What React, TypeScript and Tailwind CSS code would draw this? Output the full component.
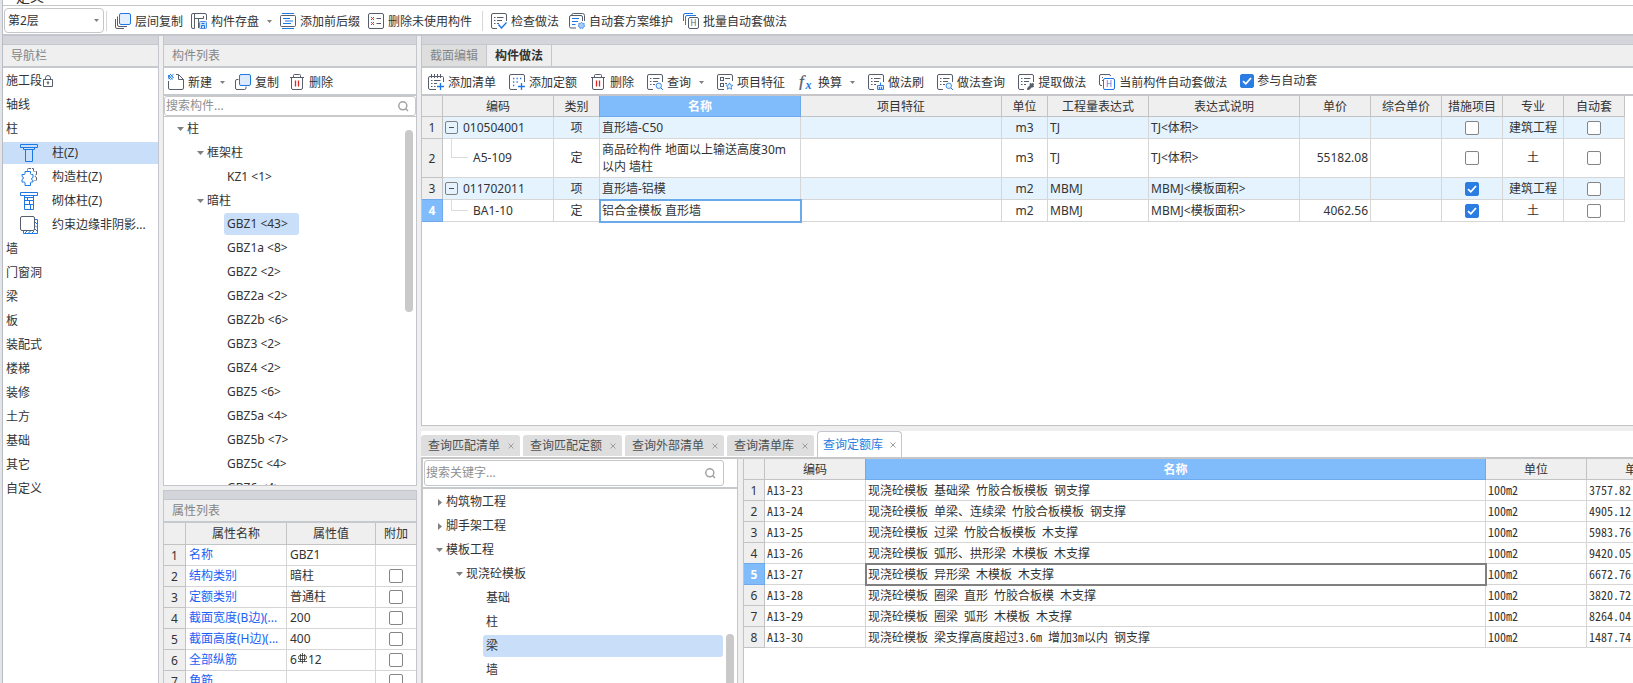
import type { ReactNode } from "react";

const DARK = "#565d6b";
const BLUE = "#1c78e4";

function Icon({ children, size = 16 }: { children: ReactNode; size?: number }) {
  return (
    <svg width={size} height={size} viewBox={`0 0 ${size} ${size}`} fill="none" stroke={DARK} className="shrink-0" aria-hidden="true">
      {children}
    </svg>
  );
}

// sheet outline with three text rows, base of most toolbar icons
function Sheet() {
  return (
    <>
      <path d="M15.5 8V2A1.5 1.5 0 0 0 14 .5H2A1.5 1.5 0 0 0 .5 2v12A1.5 1.5 0 0 0 2 15.5h4" />
      <path d="M3 4.5h1.5M6 4.5h6.500M3 7.500h1.500M6 7.500h5M3 10.500h1.500M6 10.500h2" />
    </>
  );
}

const icons = {
  layerCopy: (
    <Icon>
      <path d="M2.500 3.500v8.500a1.500 1.500 0 0 0 1.500 1.500h8M.5 6v8A1.500 1.500 0 0 0 2 15.500h7" />
      <rect x="4.500" y=".5" width="11" height="11" rx="1.500" fill="#e3effd" stroke={BLUE} />
    </Icon>
  ),
  store: (
    <Icon>
      <path d="M15.500 7V2A1.500 1.500 0 0 0 14 .5H2A1.500 1.500 0 0 0 .5 2v12A1.500 1.500 0 0 0 2 15.500h1.500V1M7.500 15V9.500M3.500 5.500h9V3M7.500 9.500V5.500" />
      <rect x="8.500" y="8.500" width="7" height="7" rx="1" stroke="#4a90e8" fill="#cfe2fb" />
      <path d="M10.500 15v-2.500h3V15M10.500 10.500h3" stroke={BLUE} />
    </Icon>
  ),
  affix: (
    <Icon>
      <path d="M2 .5h12M2 15.500h12" stroke={BLUE} />
      <rect x=".5" y="2.500" width="15" height="11" rx="1" />
      <path d="M3 5.500h7M5 8h8M3 10.500h8" stroke={BLUE} />
    </Icon>
  ),
  removeUnused: (
    <Icon>
      <rect x=".5" y=".5" width="15" height="15" rx="1.500" />
      <path d="M3 4l3 3M6 4L3 7M3 9l3 3M6 9l-3 3" stroke="#e02f2f" />
      <path d="M8.500 5.500H13M8.500 10.500H13" />
    </Icon>
  ),
  check: (
    <Icon>
      <Sheet />
      <path d="M7.500 11.500l3 3.500 5-5.500" stroke={BLUE} strokeWidth="1.400" />
    </Icon>
  ),
  scheme: (
    <Icon>
      <path d="M2.500 2.500a2 2 0 0 1 2-2h9a2 2 0 0 1 2 2V8M13.500 8V4A1.500 1.500 0 0 0 12 2.500H2A1.500 1.500 0 0 0 .5 4v9.500A1.500 1.500 0 0 0 2 15h5" />
      <path d="M3 5.500h7M3 8.500h6M3 11.500h3.500" stroke={BLUE} />
      <path d="M12.500 9.200l1 1.200h1.700l-.3 1.600.9 1.200-1.400.7-.5 1.500-1.400-.5-1.500.5-.5-1.500-1.300-.7.8-1.300-.2-1.500h1.700z" fill="#a9ccf7" stroke="#5a9bea" />
    </Icon>
  ),
  batch: (
    <Icon>
      <path d="M.5 8V2A1.500 1.500 0 0 1 2 .5h8M2.500 12V4A1.500 1.500 0 0 1 4 2.500h9" stroke={BLUE} />
      <rect x="5.500" y="4.500" width="10" height="11" rx="1.500" />
      <text x="7.600" y="13" fontSize="8" fill={DARK} stroke="none">H</text>
    </Icon>
  ),
  create: (
    <Icon>
      <path d="M.5 7v7A1.500 1.500 0 0 0 2 15.500h12a1.500 1.500 0 0 0 1.500-1.500V5.500l-5-5H8M10.500 1v4.500h5" />
      <path d="M0 1l4.500 4.500M2 0l3.500 3.500M0 3l2.500 2.500M5.500 0L0 5.500M3 0L0 3M5.500 3L3 5.500" stroke={BLUE} strokeWidth=".9" />
    </Icon>
  ),
  copy: (
    <Icon>
      <path d="M3.500 5.500H2A1.500 1.500 0 0 0 .5 7v7A1.500 1.500 0 0 0 2 15.500h7.500A1.500 1.500 0 0 0 11 14v-1.500" />
      <rect x="4.500" y=".5" width="11" height="11" rx="1.500" fill="#dceafc" stroke={BLUE} />
    </Icon>
  ),
  trash: (
    <Icon>
      <path d="M1 3.500h14M4.500 3.500v-2q0-1 1-1h5q1 0 1 1v2M2.500 3.500V14q0 1.500 1.500 1.500h8q1.500 0 1.500-1.500V3.500" />
      <path d="M6.500 6.500v6M9.500 6.500v6" stroke="#dc2626" strokeWidth="1.300" />
    </Icon>
  ),
  addList: (
    <Icon>
      <path d="M15.500 8V3.500a1 1 0 0 0-1-1H2A1.500 1.500 0 0 0 .5 4v10A1.500 1.500 0 0 0 2 15.500h6M3.500 0v4M6.500 0v4M9.500 0v4M12.500 0v4M3 6.500h1.500M6 6.500h6.500M3 9.500h1.500M6 9.500h3M3 12.500h1.500M6 12.500h1.500" />
      <path d="M12.500 9v7M9 12.500h7" stroke={BLUE} strokeWidth="1.300" />
    </Icon>
  ),
  addQuota: (
    <Icon>
      <path d="M15.500 8V2A1.500 1.500 0 0 0 14 .5H2A1.500 1.500 0 0 0 .5 2v12A1.500 1.500 0 0 0 2 15.500h6" />
      <path d="M4 4.500h1.300M7.500 4.500h1.300M11 4.500h1.300M4 8h1.300M7.500 8h1.300M4 11.500h1.300" stroke={BLUE} strokeWidth="1.300" />
      <path d="M12.500 9v7M9 12.500h7" stroke={BLUE} strokeWidth="1.300" />
    </Icon>
  ),
  query: (
    <Icon>
      <Sheet />
      <circle cx="11.800" cy="11.800" r="2.700" stroke="#3c8bea" fill="#e6f1fe" />
      <path d="M13.800 13.800L16 16" stroke={BLUE} />
    </Icon>
  ),
  feature: (
    <Icon>
      <path d="M15.500 7V2A1.500 1.500 0 0 0 14 .5H2A1.500 1.500 0 0 0 .5 2v12A1.500 1.500 0 0 0 2 15.500h5M8 4.500h5M8 9.500h2" />
      <rect x="3.500" y="3.500" width="3" height="3" />
      <rect x="3.500" y="9.500" width="3" height="3" />
      <path d="M12.500 8.800l1 2.200 2.400.3-1.800 1.600.5 2.400-2.100-1.200-2.100 1.200.5-2.400-1.800-1.600 2.400-.3z" fill="#e6f1fe" stroke="#4a94ec" />
    </Icon>
  ),
  convert: (
    <Icon>
      <text x="1" y="12.500" fontSize="17" fontStyle="italic" fontFamily="Liberation Serif" fill={DARK} stroke={DARK} strokeWidth=".3">f</text>
      <text x="7.500" y="15" fontSize="12" fontStyle="italic" fontWeight="bold" fontFamily="Liberation Serif" fill={BLUE} stroke="none">x</text>
    </Icon>
  ),
  brush: (
    <Icon>
      <Sheet />
      <path d="M12.500 8.500v3M9.500 15.500v-4h6v4zM11.500 13v2.500M13.500 13v2.500" stroke="#2f83e8" fill="#cfe2fb" />
    </Icon>
  ),
  extract: (
    <Icon>
      <Sheet />
      <path d="M9.500 15.500l.4-1.800 3.200-3.200 1.500 1.500-3.200 3.200z" fill={DARK} />
      <path d="M12 9.500l3.500 3.500M13.800 11.500L15.500 9.500" strokeWidth="2" />
    </Icon>
  ),
  currentAuto: (
    <Icon>
      <path d="M3 11.500H2A1.500 1.500 0 0 1 .5 10V2A1.500 1.500 0 0 1 2 .5h8A1.500 1.500 0 0 1 11.500 2M3 3.500h1M3 6.500h1" />
      <rect x="4.500" y="4.500" width="11" height="11" rx="1.500" stroke={BLUE} fill="#fff" />
      <text x="7" y="13" fontSize="8" fill={BLUE} stroke="none">H</text>
    </Icon>
  ),
  column: (
    <Icon size={18}>
      <path d="M.5.5h17v3H.5zM3.500 3.500v2h11v-2M5.500 5.500h7v12h-7z" stroke={BLUE} />
    </Icon>
  ),
  structColumn: (
    <Icon size={18}>
      <path d="M7.500 2.500v-1q0-1 1-1h5v2q0 1 1 1h2v3q-1.500.5-1.500 1.500t1.500 1.500v3h-2" strokeDasharray="5 1" />
      <path d="M5 3.500h5.500v2q0 1 1 1H13v3q-1.500.5-1.500 1.500t1.500 1.500V14h-1.500q-1 0-1 1v2.500H5V15q0-1-1-1H2v-2.500q1.500-.5 1.500-1.500T2 8.500v-2h2q1 0 1-1z" stroke={BLUE} fill="#fff" />
    </Icon>
  ),
  brickColumn: (
    <Icon size={18}>
      <path d="M.5.5h17v3H.5zM4.500 3.500v14h9v-14M4.500 8.500h9M4.500 12.500h9M9.500 8.500v4M7.500 5.500v3M10.500 12.500v5M4.500 5.500h9" stroke={BLUE} />
    </Icon>
  ),
  edgeColumn: (
    <Icon size={18}>
      <path d="M3.500 15v2.500h14v-14H15M5 17l2-2M8.500 17l2-2M12 17l2-2M15 6l2 2M15 9.500l2 2M15 13l2 2" stroke={BLUE} />
      <rect x=".5" y=".5" width="14" height="14" rx="1.500" fill="#fff" />
    </Icon>
  ),
};

function Down({ small = false }: { small?: boolean }) {
  return (
    <svg width={small ? 5 : 7} height={small ? 3 : 4} viewBox="0 0 7 4" preserveAspectRatio="none" className="shrink-0" aria-hidden="true">
      <path d="M0 0h7L3.500 4z" fill="#808080" />
    </svg>
  );
}

function Right() {
  return (
    <svg width="4" height="7" viewBox="0 0 4 7" className="shrink-0" aria-hidden="true">
      <path d="M0 0v7l4-3.500z" fill="#808080" />
    </svg>
  );
}

function Magnifier() {
  return (
    <svg width="11" height="11" viewBox="0 0 11 11" fill="none" stroke="#a3a3a3" strokeWidth="1.500" className="shrink-0" aria-hidden="true">
      <circle cx="4.800" cy="4.800" r="4" />
      <path d="M7.700 7.700l2.300 2.300" />
    </svg>
  );
}

function Tool({ icon, label, menu = false }: { icon: ReactNode; label: string; menu?: boolean }) {
  return (
    <button type="button" className="flex shrink-0 items-center gap-1 whitespace-nowrap">
      {icon}
      <span className="pt-px">{label}</span>
      {menu && (
        <span className="pl-1">
          <Down small />
        </span>
      )}
    </button>
  );
}

function Check({ label, checked = false }: { label: string; checked?: boolean }) {
  return (
    <span className="relative inline-flex size-[14px] shrink-0 align-middle">
      <input
        type="checkbox"
        aria-label={label}
        defaultChecked={checked}
        className="peer size-[14px] appearance-none rounded-[2px] border border-[#858585] bg-white checked:border-[#2b7de1] checked:bg-[#2b7de1]"
      />
      <svg viewBox="0 0 14 14" className="pointer-events-none absolute inset-0 hidden peer-checked:block" fill="none" stroke="#fff" strokeWidth="1.800">
        <path d="M3 7.200l2.800 2.600L11 4" />
      </svg>
    </span>
  );
}

function PanelTitle({ children }: { children: ReactNode }) {
  return (
    <>
      <div className="h-[9px] shrink-0 border-b border-[#c3c8cd] bg-[#d3d5da]" />
      <h2 className="h-[23px] shrink-0 border-b-2 border-[#c6cace] bg-[#efefef] pl-2 leading-[22px] text-[#858585]">{children}</h2>
    </>
  );
}

const navTop = ["轴线", "柱"];
const navColumn = [
  { icon: icons.column, label: "柱(Z)", active: true },
  { icon: icons.structColumn, label: "构造柱(Z)" },
  { icon: icons.brickColumn, label: "砌体柱(Z)" },
  { icon: icons.edgeColumn, label: "约束边缘非阴影..." },
];
const navRest = ["墙", "门窗洞", "梁", "板", "装配式", "楼梯", "装修", "土方", "基础", "其它", "自定义"];

const members = [
  "GBZ1 <43>", "GBZ1a <8>", "GBZ2 <2>", "GBZ2a <2>", "GBZ2b <6>", "GBZ3 <2>", "GBZ4 <2>",
  "GBZ5 <6>", "GBZ5a <4>", "GBZ5b <7>", "GBZ5c <4>", "GBZ6 <4>",
];

function Rebar() {
  return (
    <svg width="11" height="11" viewBox="0 0 11 11" fill="none" stroke="#333" strokeWidth=".8" className="mb-1 inline-block" role="img" aria-label="HRB400">
      <path d="M3 2.500h5q1.500 0 1.500 2t-1.500 2H3q-1.500 0-1.500-2t1.500-2zM5.500 0v10.500M3.500 1v7.500M7.500 1v7.500M1 8.500h9" />
    </svg>
  );
}

const props: { name: string; value: ReactNode; extra: boolean }[] = [
  { name: "名称", value: "GBZ1", extra: false },
  { name: "结构类别", value: "暗柱", extra: true },
  { name: "定额类别", value: "普通柱", extra: true },
  { name: "截面宽度(B边)(...", value: "200", extra: true },
  { name: "截面高度(H边)(...", value: "400", extra: true },
  { name: "全部纵筋", value: <>6<Rebar />12</>, extra: true },
  { name: "角筋", value: "", extra: true },
];

const methods = [
  { code: "010504001", kind: "项", name: "直形墙-C50", unit: "m3", expr: "TJ", note: "TJ<体积>", price: "", measure: false, major: "建筑工程" },
  { code: "A5-109", kind: "定", name: "商品砼构件 地面以上输送高度30m以内 墙柱", unit: "m3", expr: "TJ", note: "TJ<体积>", price: "55182.08", measure: false, major: "土" },
  { code: "011702011", kind: "项", name: "直形墙-铝模", unit: "m2", expr: "MBMJ", note: "MBMJ<模板面积>", price: "", measure: true, major: "建筑工程" },
  { code: "BA1-10", kind: "定", name: "铝合金模板 直形墙", unit: "m2", expr: "MBMJ", note: "MBMJ<模板面积>", price: "4062.56", measure: true, major: "土" },
];
const methodHeads = ["编码", "类别", "名称", "项目特征", "单位", "工程量表达式", "表达式说明", "单价", "综合单价", "措施项目", "专业", "自动套"];
const methodWidths = [
  "w-[21px]", "w-[111px]", "w-[46px]", "w-[201px]", "w-[201px]", "w-[46px]", "w-[101px]",
  "w-[151px]", "w-[71px]", "w-[71px]", "w-[61px]", "w-[61px]", "w-[61px]",
];

const quotas = [
  ["A13-23", "现浇砼模板 基础梁 竹胶合板模板 钢支撑", "3757.82"],
  ["A13-24", "现浇砼模板 单梁、连续梁 竹胶合板模板 钢支撑", "4905.12"],
  ["A13-25", "现浇砼模板 过梁 竹胶合板模板 木支撑", "5983.76"],
  ["A13-26", "现浇砼模板 弧形、拱形梁 木模板 木支撑", "9420.05"],
  ["A13-27", "现浇砼模板 异形梁 木模板 木支撑", "6672.76"],
  ["A13-28", "现浇砼模板 圈梁 直形 竹胶合板模 木支撑", "3820.72"],
  ["A13-29", "现浇砼模板 圈梁 弧形 木模板 木支撑", "8264.04"],
  ["A13-30", "现浇砼模板 梁支撑高度超过3.6m 增加3m以内 钢支撑", "1487.74"],
];

const th = "border-r border-b border-[#c3c3c3] bg-[#efefef] p-0 pt-px text-center font-normal whitespace-nowrap";
const thActive = "border-r border-b border-[#6ea9e9] bg-[#80bbfb] p-0 pt-px text-center font-bold text-white shadow-[-1px_0_0_#6ea9e9]";
const td = "border-r border-b border-[#d6d6d6] py-0";
const rowHead = "border-r border-b border-[#c3c3c3] bg-[#efefef] p-0 pt-px text-center font-normal";
const rowHeadActive = "border-r border-b border-[#6ea9e9] bg-[#80bbfb] p-0 pt-px text-center font-bold text-white shadow-[0_-1px_0_#6ea9e9]";

function TopBar() {
  return (
    <header className="shrink-0">
      <div className="flex h-[6px] items-end overflow-hidden border-b border-[#c3c5c9] pl-[13px]">
        <span className="text-sm leading-4">定义</span>
      </div>
      <div className="flex h-[30px] items-center border-b-2 border-[#c3c6cc] pt-px pl-px">
        <div className="relative shrink-0">
          <select aria-label="楼层" className="h-[25px] w-[100px] appearance-none rounded-[4px] border border-[#c4c6ca] bg-white pl-[3px]">
            <option>第2层</option>
          </select>
          <span className="pointer-events-none absolute top-[11px] right-[5px] flex">
            <Down small />
          </span>
        </div>
        <span className="mr-2 ml-0.5 h-5 w-px bg-[#d6d6d6]" />
        <div className="flex items-center gap-2 pt-px">
          <Tool icon={icons.layerCopy} label="层间复制" />
          <Tool icon={icons.store} label="构件存盘" menu />
          <Tool icon={icons.affix} label="添加前后缀" />
          <Tool icon={icons.removeUnused} label="删除未使用构件" />
        </div>
        <span className="mr-2 ml-[10px] h-5 w-px bg-[#d6d6d6]" />
        <div className="flex items-center gap-[10px] pt-px">
          <Tool icon={icons.check} label="检查做法" />
          <Tool icon={icons.scheme} label="自动套方案维护" />
          <Tool icon={icons.batch} label="批量自动套做法" />
        </div>
      </div>
    </header>
  );
}

function NavPanel() {
  return (
    <nav className="flex w-[156px] shrink-0 flex-col border-r border-[#c3c6cc] bg-white">
      <PanelTitle>导航栏</PanelTitle>
      <ul className="pt-px leading-6">
        <li className="flex items-center pl-[3px]">
          施工段
          <svg width="10" height="12" viewBox="0 0 10 12" fill="none" stroke={DARK} className="ml-px" aria-hidden="true">
            <path d="M.5 4.500h9v7h-9zM2.500 4.500V3a2.500 2.500 0 0 1 5 0v1.500M5 7v2.500" />
            <circle cx="5" cy="7.500" r=".8" />
          </svg>
        </li>
        {navTop.map((n) => (
          <li key={n} className="pl-[3px]">{n}</li>
        ))}
        {navColumn.map((n) => (
          <li key={n.label} className="flex h-6 items-center">
            <a href="#" className={`flex h-[22px] w-full items-center gap-[14px] pl-[17px] ${n.active ? "bg-[#c9dff9]" : ""}`}>
              {n.icon}
              <span className="whitespace-nowrap">{n.label}</span>
            </a>
          </li>
        ))}
        {navRest.map((n) => (
          <li key={n} className="pl-[3px]">{n}</li>
        ))}
      </ul>
    </nav>
  );
}

function MemberPanel() {
  return (
    <section className="flex h-[450px] shrink-0 flex-col border border-t-0 border-[#c3c6cc] bg-white">
      <PanelTitle>构件列表</PanelTitle>
      <div className="flex h-7 shrink-0 items-center gap-[10px] border-b-2 border-[#c6cace] pt-0.5 pl-1">
        <Tool icon={icons.create} label="新建" menu />
        <Tool icon={icons.copy} label="复制" />
        <Tool icon={icons.trash} label="删除" />
      </div>
      <label className="flex h-5 shrink-0 items-center rounded-[3px] border border-[#c9c9c9] pr-[6px] pl-px">
        <input aria-label="搜索构件" placeholder="搜索构件..." className="min-w-0 flex-1 outline-none placeholder:text-[#8f8f8f]" />
        <Magnifier />
      </label>
      <div className="flex min-h-0 flex-1 overflow-hidden border-t border-[#c9c9c9]">
        <ul className="flex-1 leading-6">
          <li className="flex items-center gap-[3px] pl-[13px]"><Down />柱</li>
          <li className="flex items-center gap-[3px] pl-[33px]"><Down />框架柱</li>
          <li className="pl-[63px]">KZ1 &lt;1&gt;</li>
          <li className="flex items-center gap-[3px] pl-[33px]"><Down />暗柱</li>
          {members.map((m, i) => (
            <li key={m} className="flex h-6 items-start pl-[60px]">
              <span className={`rounded-[3px] pl-[3px] leading-[22px] ${i === 0 ? "w-[75px] bg-[#c9dff9]" : ""}`}>{m}</span>
            </li>
          ))}
        </ul>
        <div className="mt-[13px] mr-[3px] h-[182px] w-2 rounded-full bg-[#c9c9c9]" />
      </div>
    </section>
  );
}

function PropertyPanel() {
  return (
    <section className="mt-1 flex min-h-0 flex-1 flex-col overflow-hidden border border-b-0 border-[#c3c6cc] bg-white">
      <PanelTitle>属性列表</PanelTitle>
      <table className="w-full table-fixed border-separate border-spacing-0">
        <colgroup>
          <col className="w-[22px]" />
          <col className="w-[101px]" />
          <col className="w-[89px]" />
          <col />
        </colgroup>
        <thead>
          <tr className="h-[22px]">
            <th className={th} />
            <th className={th}>属性名称</th>
            <th className={th}>属性值</th>
            <th className={`${th} border-r-0`}>附加</th>
          </tr>
        </thead>
        <tbody>
          {props.map((p, i) => (
            <tr key={p.name} className="h-[21px]">
              <th className={rowHead}>{i + 1}</th>
              <td className={`${td} truncate px-[3px] text-[#1a5ff5]`}>{p.name}</td>
              <td className={`${td} px-[3px]`}>{p.value}</td>
              <td className="border-b border-[#d6d6d6] p-0 text-center leading-[14px]">{p.extra && <Check label={`附加 ${p.name}`} />}</td>
            </tr>
          ))}
        </tbody>
      </table>
    </section>
  );
}

function MethodTable() {
  return (
    <table className="w-[1203px] table-fixed border-separate border-spacing-0">
      <colgroup>
        {methodWidths.map((w, i) => (
          <col key={i} className={w} />
        ))}
      </colgroup>
      <thead>
        <tr className="h-[21px]">
          <th className={th} />
          {methodHeads.map((h) => (
            <th key={h} className={h === "名称" ? thActive : th}>{h}</th>
          ))}
        </tr>
      </thead>
      <tbody>
        {methods.map((m, i) => {
          const parent = m.kind === "项";
          const selected = i === 3;
          return (
            <tr key={m.code} className={`${parent ? "bg-[#e5f3ff]" : "bg-white"} ${i === 1 ? "h-[39px]" : "h-[22px]"}`}>
              <th className={selected ? rowHeadActive : rowHead}>{i + 1}</th>
              <td className={`${td} relative ${parent ? "pl-0.5" : "pl-[30px]"}`}>
                {parent ? (
                  <span className="flex items-center gap-[5px]">
                    <button type="button" aria-label="折叠" className="flex size-[13px] items-center justify-center rounded-[2px] border border-[#808080]">
                      <span className="h-px w-[5px] bg-[#505050]" />
                    </button>
                    {m.code}
                  </span>
                ) : (
                  <>
                    <span className="absolute top-0 left-2 h-1/2 w-[17px] border-b border-l border-[#dcdcdc]" />
                    {m.code}
                  </>
                )}
              </td>
              <td className={`${td} text-center`}>{m.kind}</td>
              <td className={`${td} px-0.5 leading-[17px] ${selected ? "relative z-10 outline-2 -outline-offset-1 outline-[#6aa9ea]" : ""}`}>{m.name}</td>
              <td className={td} />
              <td className={`${td} text-center`}>{m.unit}</td>
              <td className={`${td} px-0.5`}>{m.expr}</td>
              <td className={`${td} px-0.5`}>{m.note}</td>
              <td className={`${td} px-0.5 text-right`}>{m.price}</td>
              <td className={td} />
              <td className={`${td} text-center leading-[14px]`}><Check label={`措施项目 ${m.code}`} checked={m.measure} /></td>
              <td className={`${td} text-center whitespace-nowrap`}>{m.major}</td>
              <td className={`${td} text-center leading-[14px]`}><Check label={`自动套 ${m.code}`} /></td>
            </tr>
          );
        })}
      </tbody>
    </table>
  );
}

function MethodPanel() {
  return (
    <section className="flex h-[390px] shrink-0 flex-col overflow-hidden border-b border-l border-[#c3c3c3] bg-white">
      <div className="h-[9px] shrink-0 border-b border-[#c3c8cd] bg-[#d3d5da]" />
      <div className="flex h-[23px] shrink-0 border-b-2 border-[#c6cace] bg-[#efefef]">
        <button type="button" className="w-[65px] border-r border-[#c3c6cc] bg-[#dedede] text-[#858585]">截面编辑</button>
        <button type="button" className="w-[65px] border-r border-[#c3c6cc] font-bold">构件做法</button>
      </div>
      <div className="flex h-7 shrink-0 items-center gap-[13px] border-b-2 border-[#c6c6ca] pt-0.5 pl-[6px]">
        <Tool icon={icons.addList} label="添加清单" />
        <Tool icon={icons.addQuota} label="添加定额" />
        <Tool icon={icons.trash} label="删除" />
        <Tool icon={icons.query} label="查询" menu />
        <Tool icon={icons.feature} label="项目特征" />
        <Tool icon={icons.convert} label="换算" menu />
        <Tool icon={icons.brush} label="做法刷" />
        <Tool icon={icons.query} label="做法查询" />
        <Tool icon={icons.extract} label="提取做法" />
        <Tool icon={icons.currentAuto} label="当前构件自动套做法" />
        <label className="flex items-center gap-[3px] pb-0.5 whitespace-nowrap">
          <Check label="参与自动套" checked />
          参与自动套
        </label>
      </div>
      <MethodTable />
    </section>
  );
}

function LibraryTree() {
  return (
    <div className="flex w-[317px] shrink-0 flex-col overflow-hidden border-r border-l-2 border-[#c6c6c6] bg-white">
      <div className="h-[30px] shrink-0 border-b-2 border-[#c6c9cc] pt-px pl-px">
        <label className="flex h-[26px] w-[300px] items-center rounded-[3px] border border-[#c4c6ca] pr-[7px] pl-px">
          <input aria-label="搜索关键字" placeholder="搜索关键字..." className="min-w-0 flex-1 outline-none placeholder:text-[#8f8f8f]" />
          <Magnifier />
        </label>
      </div>
      <div className="flex min-h-0 flex-1 gap-[3px]">
        <ul className="flex-1 pt-px leading-6">
          <li className="flex items-center gap-1 pl-[15px]"><Right />构筑物工程</li>
          <li className="flex items-center gap-1 pl-[15px]"><Right />脚手架工程</li>
          <li className="flex items-center gap-[3px] pl-[13px]"><Down />模板工程</li>
          <li className="flex items-center gap-[3px] pl-[33px]"><Down />现浇砼模板</li>
          <li className="pl-[63px]">基础</li>
          <li className="pl-[63px]">柱</li>
          <li className="flex h-6 items-center pl-[60px]">
            <span className="flex-1 rounded-[3px] bg-[#c9dff9] pl-[3px] leading-[22px]">梁</span>
          </li>
          <li className="pl-[63px]">墙</li>
        </ul>
        <div className="mt-[145px] mr-[3px] w-2 rounded-t-full bg-[#c9c9c9]" />
      </div>
    </div>
  );
}

function QuotaTable() {
  return (
    <div className="min-w-0 flex-1 overflow-hidden border-l border-[#c3c3c3] bg-white">
      <table className="w-[944px] table-fixed border-separate border-spacing-0">
        <colgroup>
          <col className="w-[21px]" />
          <col className="w-[101px]" />
          <col className="w-[620px]" />
          <col className="w-[101px]" />
          <col className="w-[101px]" />
        </colgroup>
        <thead>
          <tr className="h-[21px]">
            <th className={th} />
            <th className={th}>编码</th>
            <th className={thActive}>名称</th>
            <th className={th}>单位</th>
            <th className={th}>单价</th>
          </tr>
        </thead>
        <tbody className="font-['Noto_Sans_Mono_CJK_SC','Noto_Sans_CJK_SC',monospace]">
          {quotas.map(([code, name, price], i) => (
            <tr key={code} className="h-[21px]">
              <th className={`font-['Noto_Sans','Noto_Sans_CJK_SC',sans-serif] ${i === 4 ? rowHeadActive : rowHead}`}>{i + 1}</th>
              <td className={`${td} px-0.5 pb-px`}>{code}</td>
              <td className={`${td} px-0.5 pb-px ${i === 4 ? "relative z-10 outline-2 -outline-offset-1 outline-[#808080]" : ""}`}>{name}</td>
              <td className={`${td} px-0.5 pb-px`}>100m2</td>
              <td className={`${td} px-0.5 pb-px`}>{price}</td>
            </tr>
          ))}
        </tbody>
      </table>
    </div>
  );
}

function Close() {
  return (
    <svg width="6" height="6" viewBox="0 0 6 6" stroke="#a0a0a0" aria-hidden="true">
      <path d="M.5.5l5 5M5.500.5l-5 5" />
    </svg>
  );
}

function QueryPanel() {
  return (
    <section className="mt-[5px] flex min-h-0 flex-1 flex-col">
      <div className="flex h-7 shrink-0 items-end gap-[3px] border-b-2 border-[#c6c6c6] bg-white">
        {["查询匹配清单", "查询匹配定额", "查询外部清单", "查询清单库"].map((t) => (
          <button key={t} type="button" className="mb-px flex h-[21px] items-center gap-2 rounded-t-[3px] bg-[#dedede] pr-[6px] pl-[7px] text-[#505050]">
            {t}
            <Close />
          </button>
        ))}
        <button type="button" className="flex h-[26px] items-center gap-[7px] rounded-t-[4px] border border-b-0 border-[#c3c6cc] px-[5px] text-[#2b7de1]">
          查询定额库
          <Close />
        </button>
      </div>
      <div className="flex min-h-0 flex-1 gap-[5px]">
        <LibraryTree />
        <QuotaTable />
      </div>
    </section>
  );
}

export default function App() {
  return (
    <div lang="zh-CN" className="flex h-screen overflow-hidden bg-[#efefef] font-['Noto_Sans','Noto_Sans_CJK_SC',sans-serif] text-xs text-[#333]">
      <div className="w-[3px] shrink-0 border-r border-[#b9bcc2] bg-[#e4e5e8]" />
      <div className="flex min-w-0 flex-1 flex-col">
        <div className="bg-white">
          <TopBar />
        </div>
        <div className="flex min-h-0 flex-1">
          <NavPanel />
          <div className="mr-1 ml-1 flex w-[254px] shrink-0 flex-col">
            <MemberPanel />
            <PropertyPanel />
          </div>
          <main className="flex min-w-0 flex-1 flex-col">
            <MethodPanel />
            <QueryPanel />
          </main>
        </div>
      </div>
    </div>
  );
}
